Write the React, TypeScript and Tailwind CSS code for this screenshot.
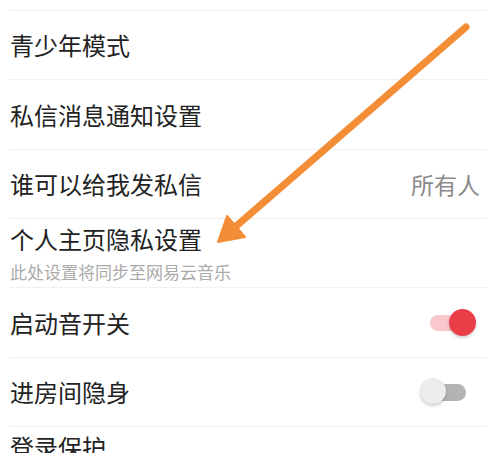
import React from 'react';

const font = { fontFamily: '"Noto Sans CJK SC", "Noto Sans", sans-serif' };

// simple switch look-alike
const Toggle = ({ on }: { on: boolean }) =>
  on ? (
    <div className="relative w-[46px] h-[28px] flex items-center">
      <div className="ml-0 w-[40px] h-[16px] rounded-full bg-[#f9c7cc]" />
      <div className="absolute right-0 top-0 w-[27px] h-[27px] rounded-full bg-[#ea3d48] shadow-[0_2px_3px_rgba(0,0,0,0.18)]" />
    </div>
  ) : (
    <div className="relative w-[46px] h-[28px] flex items-center">
      <div className="ml-[13px] w-[33px] h-[17px] rounded-full bg-[#b3b3b3]" />
      <div className="absolute left-0 top-0 w-[26px] h-[26px] rounded-full bg-[#ececec] shadow-[0_2px_3px_rgba(0,0,0,0.2)]" />
    </div>
  );

export default function App() {
  return (
    <div className="relative w-[486px] h-[453px] overflow-hidden bg-white text-[#222]" style={font}>
      <div className="ml-[10px] h-[11px] border-b border-[#f0f0f0]" />

      <div className="ml-[10px] h-[69px] border-b border-[#f0f0f0] flex items-center">
        <span className="text-[24px] leading-none">青少年模式</span>
      </div>

      <div className="ml-[10px] h-[70px] border-b border-[#f0f0f0] flex items-center">
        <span className="text-[24px] leading-none">私信消息通知设置</span>
      </div>

      <div className="ml-[10px] h-[69px] border-b border-[#f0f0f0] flex items-center justify-between pr-[6px]">
        <span className="text-[24px] leading-none">谁可以给我发私信</span>
        <span className="text-[23px] leading-none text-[#8a8a8a]">所有人</span>
      </div>

      <div className="ml-[10px] h-[69px] border-b border-[#f0f0f0] flex flex-col justify-center">
        <span className="text-[24px] leading-none">个人主页隐私设置</span>
        <span className="mt-[12px] text-[17px] leading-none text-[#ababab]">此处设置将同步至网易云音乐</span>
      </div>

      <div className="ml-[10px] h-[70px] border-b border-[#f0f0f0] flex items-center justify-between pr-[10px]">
        <span className="text-[24px] leading-none">启动音开关</span>
        <Toggle on />
      </div>

      <div className="ml-[10px] h-[69px] border-b border-[#f0f0f0] flex items-center justify-between pr-[20px]">
        <span className="text-[24px] leading-none">进房间隐身</span>
        <Toggle on={false} />
      </div>

      <div className="ml-[10px] pt-[8px]">
        <span className="text-[24px] leading-none">登录保护</span>
      </div>

      {/* annotation arrow drawn over the list */}
      <svg className="absolute inset-0 pointer-events-none" width="486" height="453" viewBox="0 0 486 453">
        <line x1="466" y1="27" x2="234" y2="228" stroke="#f38d36" strokeWidth="7" strokeLinecap="round" />
        <polygon points="218,242 227,216 245,237" fill="#f38d36" stroke="#f38d36" strokeWidth="2" strokeLinejoin="round" />
      </svg>
    </div>
  );
}
